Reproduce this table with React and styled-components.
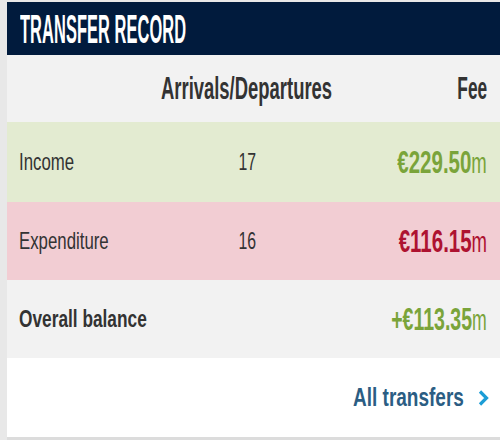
import React from "react";
import styled, { createGlobalStyle } from "styled-components";

const GlobalStyle = createGlobalStyle`
  html, body {
    margin: 0;
    padding: 0;
    background: #e8e8e8;
  }
  body {
    font-family: "Liberation Sans", Arial, sans-serif;
    color: #333333;
  }
`;

const Page = styled.div`
  padding: 2px 0 0 7px;
  width: 500px;
  height: 440px;
  box-sizing: border-box;
`;

const Card = styled.section`
  background: #ffffff;
`;

const Header = styled.div`
  height: 53px;
  background: #011b3d;
  display: flex;
  align-items: center;
  padding-left: 13px;
  overflow: hidden;
`;

// the screenshot is horizontally condensed, so each text is squeezed
const Squeeze = styled.span`
  display: inline-block;
  flex-shrink: 0;
  white-space: nowrap;
  transform: scaleX(${(p) => p.$sx});
  transform-origin: ${(p) => p.$origin || "left"} center;
`;

const Title = styled(Squeeze)`
  font-size: 40px;
  font-weight: 700;
  color: #ffffff;
  line-height: 1;
  letter-spacing: 0.2px;
`;

const Row = styled.div`
  display: grid;
  grid-template-columns: 133px 190px minmax(0, 1fr);
  align-items: center;
  height: ${(p) => p.$h}px;
  padding: 0 13px 0 12px;
  background: ${(p) => p.$bg};
`;

const Cell = styled.div`
  display: flex;
  min-width: 0;
  justify-content: ${(p) =>
    p.$align === "right" ? "flex-end" : p.$align === "center" ? "center" : "flex-start"};
`;

const ColHead = styled(Squeeze)`
  font-size: 32px;
  font-weight: 700;
  color: #333333;
`;

const Label = styled(Squeeze)`
  font-size: 24px;
  font-weight: ${(p) => (p.$bold ? 700 : 400)};
  color: #333333;
`;

const Count = styled(Squeeze)`
  font-size: 24px;
  color: #333333;
`;

const Amount = styled(Squeeze)`
  font-size: 32px;
  font-weight: 700;
  color: ${(p) => p.$color};
  line-height: 1;
`;

const Unit = styled.span`
  font-size: 29px;
  font-weight: 400;
`;

const Footer = styled.div`
  height: 79px;
  display: flex;
  align-items: center;
  justify-content: flex-end;
  gap: 13px;
  padding-right: 11px;
  border-bottom: 3px solid #dcdcdc;
`;

const LinkText = styled(Squeeze)`
  font-size: 25px;
  font-weight: 700;
  color: #2b5d83;
`;

const Chevron = () => (
  <svg width="12" height="16" viewBox="0 0 12 16">
    <path d="M3 1.5 L9.5 8 L3 14.5" fill="none" stroke="#1c9dd6" strokeWidth="3.2" />
  </svg>
);

const rows = [
  { label: "Income", count: "17", value: "€229.50", color: "#7aa43a", bg: "#e3ebd1", h: 80 },
  { label: "Expenditure", count: "16", value: "€116.15", color: "#ae1230", bg: "#f2cdd3", h: 78 },
];

export default function App() {
  return (
    <>
      <GlobalStyle />
      <Page>
        <Card>
          <Header>
            <Title $sx={0.41}>TRANSFER RECORD</Title>
          </Header>
          <Row $h={67} $bg="#f2f2f2">
            <Cell />
            <Cell $align="center">
              <ColHead $sx={0.576} $origin="center">Arrivals/Departures</ColHead>
            </Cell>
            <Cell $align="right">
              <ColHead $sx={0.54} $origin="right">Fee</ColHead>
            </Cell>
          </Row>
          {rows.map((r) => (
            <Row key={r.label} $h={r.h} $bg={r.bg}>
              <Cell>
                <Label $sx={0.7}>{r.label}</Label>
              </Cell>
              <Cell $align="center">
                <Count $sx={0.66} $origin="center">{r.count}</Count>
              </Cell>
              <Cell $align="right">
                <Amount $sx={0.64} $origin="right" $color={r.color}>
                  {r.value}
                  <Unit>m</Unit>
                </Amount>
              </Cell>
            </Row>
          ))}
          <Row $h={78} $bg="#f2f2f2">
            <Cell>
              <Label $sx={0.72} $bold>Overall balance</Label>
            </Cell>
            <Cell />
            <Cell $align="right">
              <Amount $sx={0.61} $origin="right" $color="#7aa43a">
                +€113.35
                <Unit>m</Unit>
              </Amount>
            </Cell>
          </Row>
          <Footer>
            <LinkText $sx={0.76} $origin="right">All transfers</LinkText>
            <Chevron />
          </Footer>
        </Card>
      </Page>
    </>
  );
}
